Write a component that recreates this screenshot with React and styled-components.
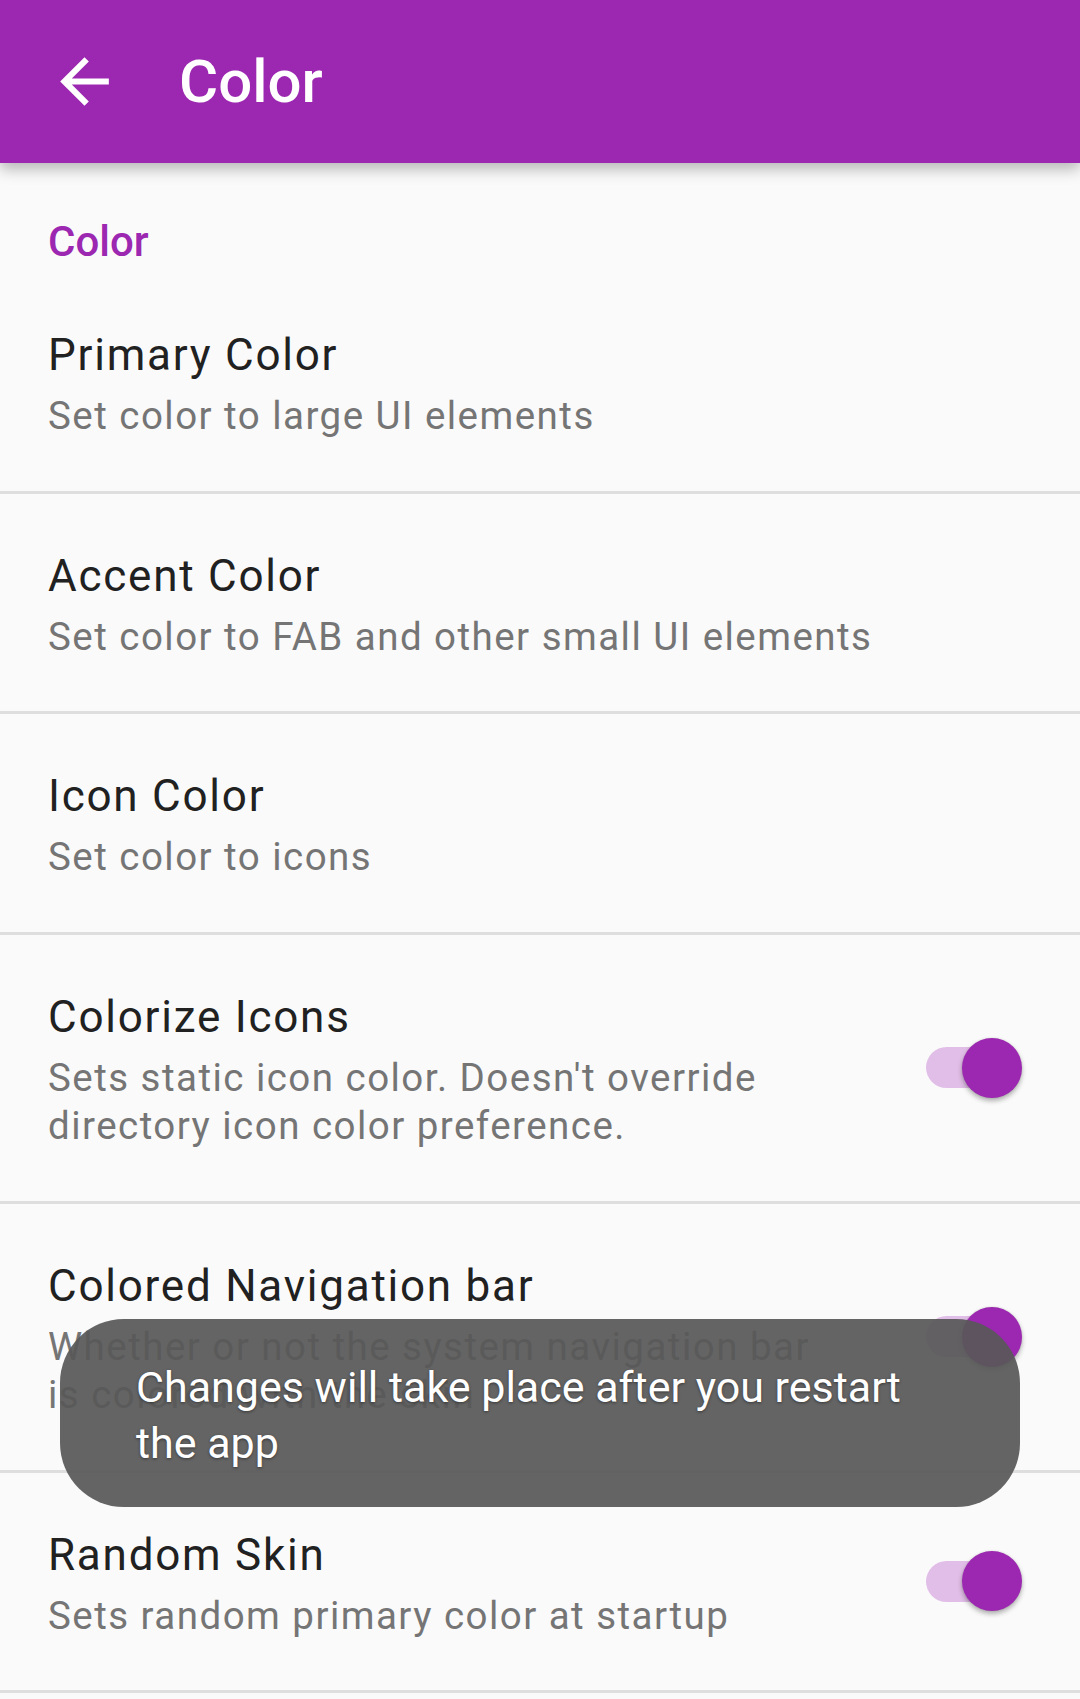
import React from "react"
import styled, { createGlobalStyle } from "styled-components"

const GlobalStyle = createGlobalStyle`
  html, body {
    margin: 0;
    padding: 0;
    background: #fafafa;
  }
  body {
    font-family: Roboto, "Noto Sans", "Liberation Sans", sans-serif;
    -webkit-font-smoothing: antialiased;
  }
`

const Screen = styled.div`
  position: relative;
  width: 1080px;
  height: 1699px;
  overflow: hidden;
  background: #fafafa;
`

const AppBar = styled.header`
  position: relative;
  z-index: 2;
  height: 163px;
  display: flex;
  align-items: center;
  padding-left: 48px;
  background: #9c27b0;
  box-shadow: 0 6px 14px rgba(0, 0, 0, 0.28);
`

const BackButton = styled.button`
  display: flex;
  width: 73px;
  height: 73px;
  padding: 0;
  border: 0;
  background: transparent;
  color: #fff;

  svg {
    width: 73px;
    height: 73px;
  }
`

const AppTitle = styled.h1`
  margin: 0 0 0 58px;
  font-size: 60px;
  font-weight: 500;
  color: #fff;
`

const Category = styled.h2`
  margin: 54px 0 0;
  padding: 0 48px 6px;
  font-size: 42px;
  line-height: 50px;
  font-weight: 500;
  color: #9c27b0;
`

const PrefList = styled.ul`
  list-style: none;
  margin: 0;
  padding: 0;
`

const PrefRow = styled.li`
  display: flex;
  align-items: center;
  padding: 56px 58px 50px 48px;
  border-bottom: 3px solid #dedede;
`

const PrefText = styled.div`
  flex: 1;
  max-width: ${(p) => (p.$withSwitch ? "780px" : "none")};
`

const PrefTitle = styled.div`
  font-size: 44px;
  line-height: 52px;
  letter-spacing: 0.04em;
  color: #212121;
`

const PrefSummary = styled.div`
  margin-top: 11px;
  font-size: 38.5px;
  line-height: 48.5px;
  letter-spacing: 0.038em;
  color: #757575;
`

const SwitchWrap = styled.div`
  position: relative;
  width: 96px;
  height: 60px;
  margin-left: auto;
  margin-top: -6px;
  display: flex;
  align-items: center;
`

const Track = styled.div`
  width: 94px;
  height: 41px;
  border-radius: 21px;
  background: ${(p) => (p.$on ? "#e1bee7" : "#bdbdbd")};
`

const Thumb = styled.div`
  position: absolute;
  top: 0;
  right: 0;
  width: 60px;
  height: 60px;
  border-radius: 50%;
  background: ${(p) => (p.$on ? "#9c27b0" : "#f1f1f1")};
  box-shadow: 0 3px 5px rgba(0, 0, 0, 0.3), 0 0 2px rgba(0, 0, 0, 0.12);
`

const Toast = styled.div`
  position: absolute;
  z-index: 3;
  left: 60px;
  top: 1319px;
  width: 960px;
  box-sizing: border-box;
  padding: 40px 76px 36px 76px;
  border-radius: 64px;
  background: rgba(88, 88, 88, 0.93);
  color: #fff;
  font-size: 43px;
  line-height: 56px;
  text-shadow: 0 1px 3px rgba(0, 0, 0, 0.45);
`

const prefs = [
  { title: "Primary Color", summary: "Set color to large UI elements" },
  {
    title: "Accent Color",
    summary: "Set color to FAB and other small UI elements",
  },
  { title: "Icon Color", summary: "Set color to icons" },
  {
    title: "Colorize Icons",
    summary:
      "Sets static icon color. Doesn't override directory icon color preference.",
    toggle: true,
  },
  {
    title: "Colored Navigation bar",
    summary: "Whether or not the system navigation bar is colored with the skin",
    toggle: true,
  },
  {
    title: "Random Skin",
    summary: "Sets random primary color at startup",
    toggle: true,
  },
]

const Switch = ({ on }) => (
  <SwitchWrap>
    <Track $on={on} />
    <Thumb $on={on} />
  </SwitchWrap>
)

const App = () => {
  return (
    <Screen>
      <GlobalStyle />
      <AppBar>
        <BackButton aria-label="Back">
          <svg viewBox="0 0 24 24" fill="currentColor">
            <path d="M20 11H7.83l5.59-5.59L12 4l-8 8 8 8 1.41-1.41L7.83 13H20v-2z" />
          </svg>
        </BackButton>
        <AppTitle>Color</AppTitle>
      </AppBar>

      <Category>Color</Category>
      <PrefList>
        {prefs.map((p) => (
          <PrefRow key={p.title}>
            <PrefText $withSwitch={p.toggle}>
              <PrefTitle>{p.title}</PrefTitle>
              <PrefSummary>{p.summary}</PrefSummary>
            </PrefText>
            {p.toggle && <Switch on />}
          </PrefRow>
        ))}
      </PrefList>

      <Toast>Changes will take place after you restart the app</Toast>
    </Screen>
  )
}

export default App
